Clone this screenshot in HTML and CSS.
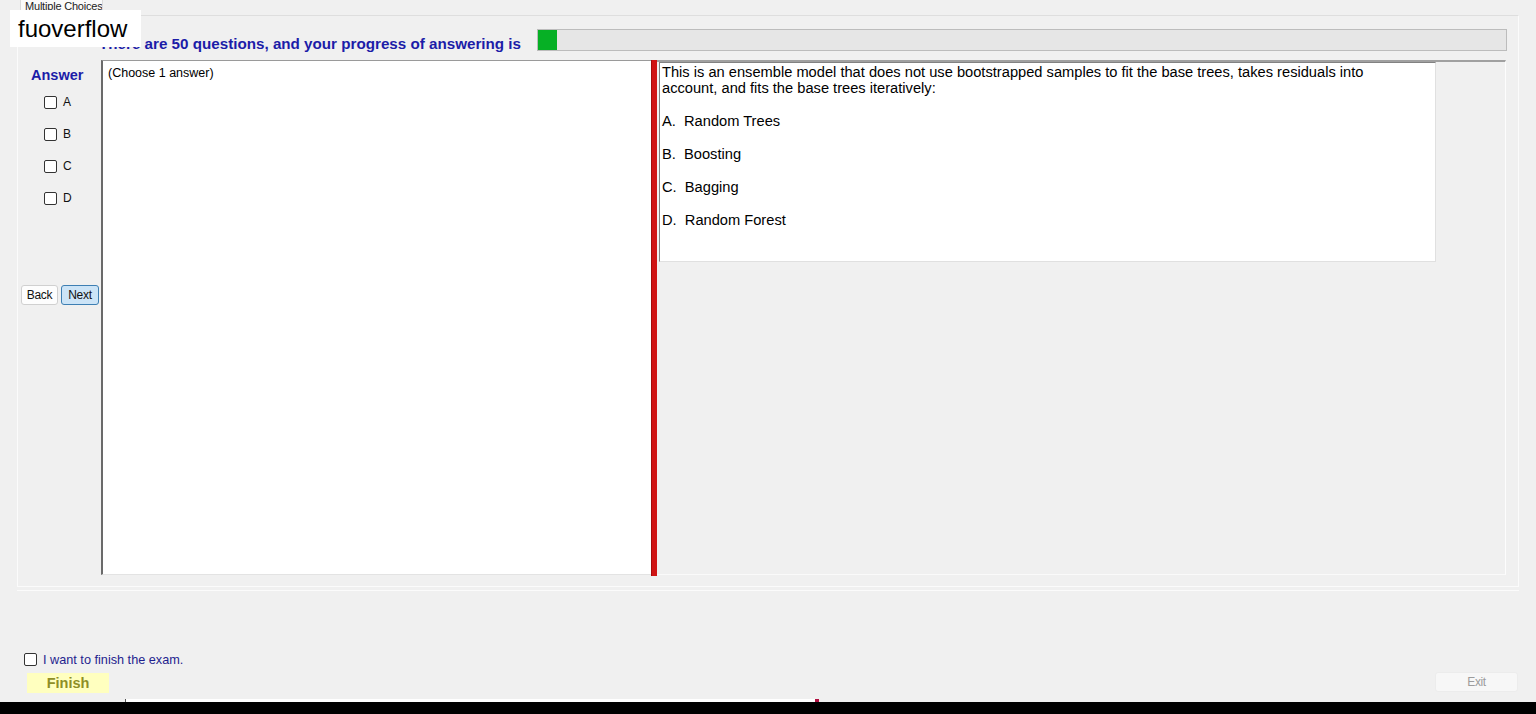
FILE: index.html
```html
<!DOCTYPE html>
<html lang="en">
<head>
<meta charset="utf-8">
<title>Multiple Choices</title>
<link rel="stylesheet" href="styles.css">
</head>
<body>
<div class="window">
  <div class="tabs">
    <div class="tab">Multiple Choices</div>
  </div>

  <div class="panel">
    <div class="header-row">
      <div class="heading">There are 50 questions, and your progress of answering is</div>
      <div class="progress"><div class="progress-fill" style="width:19px"></div></div>
    </div>

    <div class="body-row">
      <div class="sidebar">
        <div class="answer-title">Answer</div>
        <label class="choice"><span class="box"></span><span class="choice-label">A</span></label>
        <label class="choice"><span class="box"></span><span class="choice-label">B</span></label>
        <label class="choice"><span class="box"></span><span class="choice-label">C</span></label>
        <label class="choice"><span class="box"></span><span class="choice-label">D</span></label>
        <div class="nav">
          <button class="btn btn-back">Back</button>
          <button class="btn btn-next">Next</button>
        </div>
      </div>

      <div class="notes">(Choose 1 answer)</div>

      <div class="splitter"></div>

      <div class="question-pane">
        <div class="question-box">
          <p class="question">This is an ensemble model that does not use bootstrapped samples to fit the base trees, takes residuals into account, and fits the base trees iteratively:</p>
          <div class="option">A.&nbsp; Random Trees</div>
          <div class="option">B.&nbsp; Boosting</div>
          <div class="option">C.&nbsp; Bagging</div>
          <div class="option">D.&nbsp; Random Forest</div>
        </div>
      </div>
    </div>
  </div>

  <div class="footer">
    <label class="finish-check"><span class="box"></span><span class="finish-text">I want to finish the exam.</span></label>
    <div class="footer-row">
      <button class="btn-finish">Finish</button>
      <button class="btn-exit">Exit</button>
    </div>
    <div class="strip"><span class="strip-mark"></span></div>
  </div>

  <div class="taskbar"></div>

  <div class="brand">fuoverflow</div>
</div>
</body>
</html>
```

FILE: styles.css
```css
* {
  box-sizing: border-box;
}

html, body {
  margin: 0;
  padding: 0;
}

body {
  width: 1536px;
  height: 714px;
  overflow: hidden;
  background: #f0f0f0;
  font-family: "Liberation Sans", Arial, sans-serif;
  color: #000;
}

.window {
  position: relative;
  height: 714px;
  display: flex;
  flex-direction: column;
}

/* tab strip */
.tabs {
  height: 15px;
  padding-left: 20px;
  display: flex;
}

.tab {
  width: 83px;
  height: 15px;
  background: #fafafa;
  border-left: 1px solid #dadada;
  border-right: 1px solid #dadada;
  font-size: 11px;
  line-height: 13px;
  padding-left: 4px;
  color: #222;
  white-space: nowrap;
  overflow: hidden;
  letter-spacing: -0.2px;
}

/* tab page */
.panel {
  margin-left: 17px;
  width: 1502px;
  height: 572px;
  border: 1px solid #fbfbfb;
  border-top-color: #dedede;
  padding-bottom: 11px;
  box-shadow: 0 3px 0 #f0f0f0, 0 4px 0 #fbfbfb;
  display: flex;
  flex-direction: column;
}

.header-row {
  height: 44px;
  display: flex;
  align-items: flex-start;
}

.heading {
  margin-left: 81px;
  width: 438px;
  flex: none;
  padding-top: 20px;
  font-size: 15.2px;
  line-height: 16px;
  font-weight: bold;
  color: #1c1ca8;
  white-space: nowrap;
}

.progress {
  margin-top: 13px;
  width: 970px;
  height: 22px;
  background: #e6e6e6;
  border: 1px solid #bcbcbc;
}

.progress-fill {
  height: 20px;
  background: #06b025;
}

.body-row {
  height: 515px;
  display: flex;
}

/* answer column */
.sidebar {
  width: 83px;
  padding-top: 7px;
  display: flex;
  flex-direction: column;
}

.answer-title {
  padding-left: 13px;
  font-size: 14.5px;
  line-height: 16px;
  font-weight: bold;
  color: #1c1ca8;
  margin-bottom: 3px;
}

.choice {
  height: 32px;
  padding-left: 26px;
  display: flex;
  align-items: center;
  font-size: 12px;
}

.box {
  width: 13px;
  height: 13px;
  border: 1px solid #333;
  border-radius: 2px;
  background: #fff;
  flex: none;
}

.choice-label {
  margin-left: 6px;
  color: #111;
}

.nav {
  margin-top: 71px;
  padding-left: 3px;
  display: flex;
  gap: 3px;
}

.btn {
  height: 20px;
  padding: 0;
  font-family: "Liberation Sans", Arial, sans-serif;
  font-size: 12px;
  letter-spacing: -0.3px;
  color: #111;
  border-radius: 3px;
}

.btn-back {
  width: 37px;
  background: #fdfdfd;
  border: 1px solid #d0d0d0;
}

.btn-next {
  width: 38px;
  background: #cce4f7;
  border: 1px solid #3e7fb3;
}

/* notes box */
.notes {
  width: 550px;
  background: #fff;
  border-top: 1px solid #9a9a9a;
  border-left: 2px solid #6a6a6a;
  border-bottom: 1px solid #e3e3e3;
  padding: 5px 5px;
  font-size: 12.5px;
  line-height: 14px;
}

.splitter {
  width: 6px;
  height: 516px;
  background: #d01414;
  border-left: 1px solid #a40c0c;
}

/* question pane */
.question-pane {
  width: 849px;
  border-top: 2px solid #a0a0a0;
  border-right: 1px solid #fdfdfd;
  border-bottom: 1px solid #fafafa;
  padding-left: 2px;
}

.question-box {
  width: 777px;
  height: 200px;
  background: #fff;
  border-top: 1px solid #828282;
  border-left: 1px solid #828282;
  border-right: 1px solid #e0e0e0;
  border-bottom: 1px solid #e0e0e0;
  padding: 1px 2px;
  font-size: 14.67px;
  line-height: 16px;
}

.question {
  margin: 0;
  width: 740px;
}

.option {
  margin-top: 17px;
}

/* footer */
.footer {
  height: 115px;
  padding-top: 66px;
  display: flex;
  flex-direction: column;
}

.finish-check {
  height: 13px;
  padding-left: 24px;
  display: flex;
  align-items: center;
}

.finish-text {
  margin-left: 6px;
  font-size: 12.7px;
  color: #1f1f8f;
}

.footer-row {
  margin-top: 6px;
  display: flex;
  justify-content: space-between;
  align-items: flex-start;
  padding-left: 27px;
  padding-right: 18px;
}

.btn-finish {
  width: 82px;
  height: 20px;
  margin-top: 1px;
  padding: 0;
  border: none;
  background: #ffffbf;
  font-family: "Liberation Sans", Arial, sans-serif;
  font-size: 14.5px;
  font-weight: bold;
  color: #8e8e26;
}

.btn-exit {
  width: 83px;
  height: 20px;
  padding: 0;
  border: 1px solid #ececec;
  border-radius: 3px;
  background: #f7f7f7;
  font-family: "Liberation Sans", Arial, sans-serif;
  font-size: 12px;
  letter-spacing: -0.4px;
  color: #9c9c9c;
}

.strip {
  margin-top: 6px;
  margin-left: 125px;
  width: 694px;
  height: 3px;
  background: #fff;
  border-left: 1px solid #555;
  display: flex;
  justify-content: flex-end;
}

.strip-mark {
  width: 4px;
  height: 3px;
  background: #b01040;
}

.taskbar {
  height: 12px;
  background: #000;
}

/* brand label over the top-left corner */
.brand {
  position: absolute;
  left: 10px;
  top: 10px;
  width: 131px;
  height: 37px;
  background: #fff;
  padding-left: 8px;
  font-size: 24px;
  line-height: 37px;
  color: #000;
}
```
